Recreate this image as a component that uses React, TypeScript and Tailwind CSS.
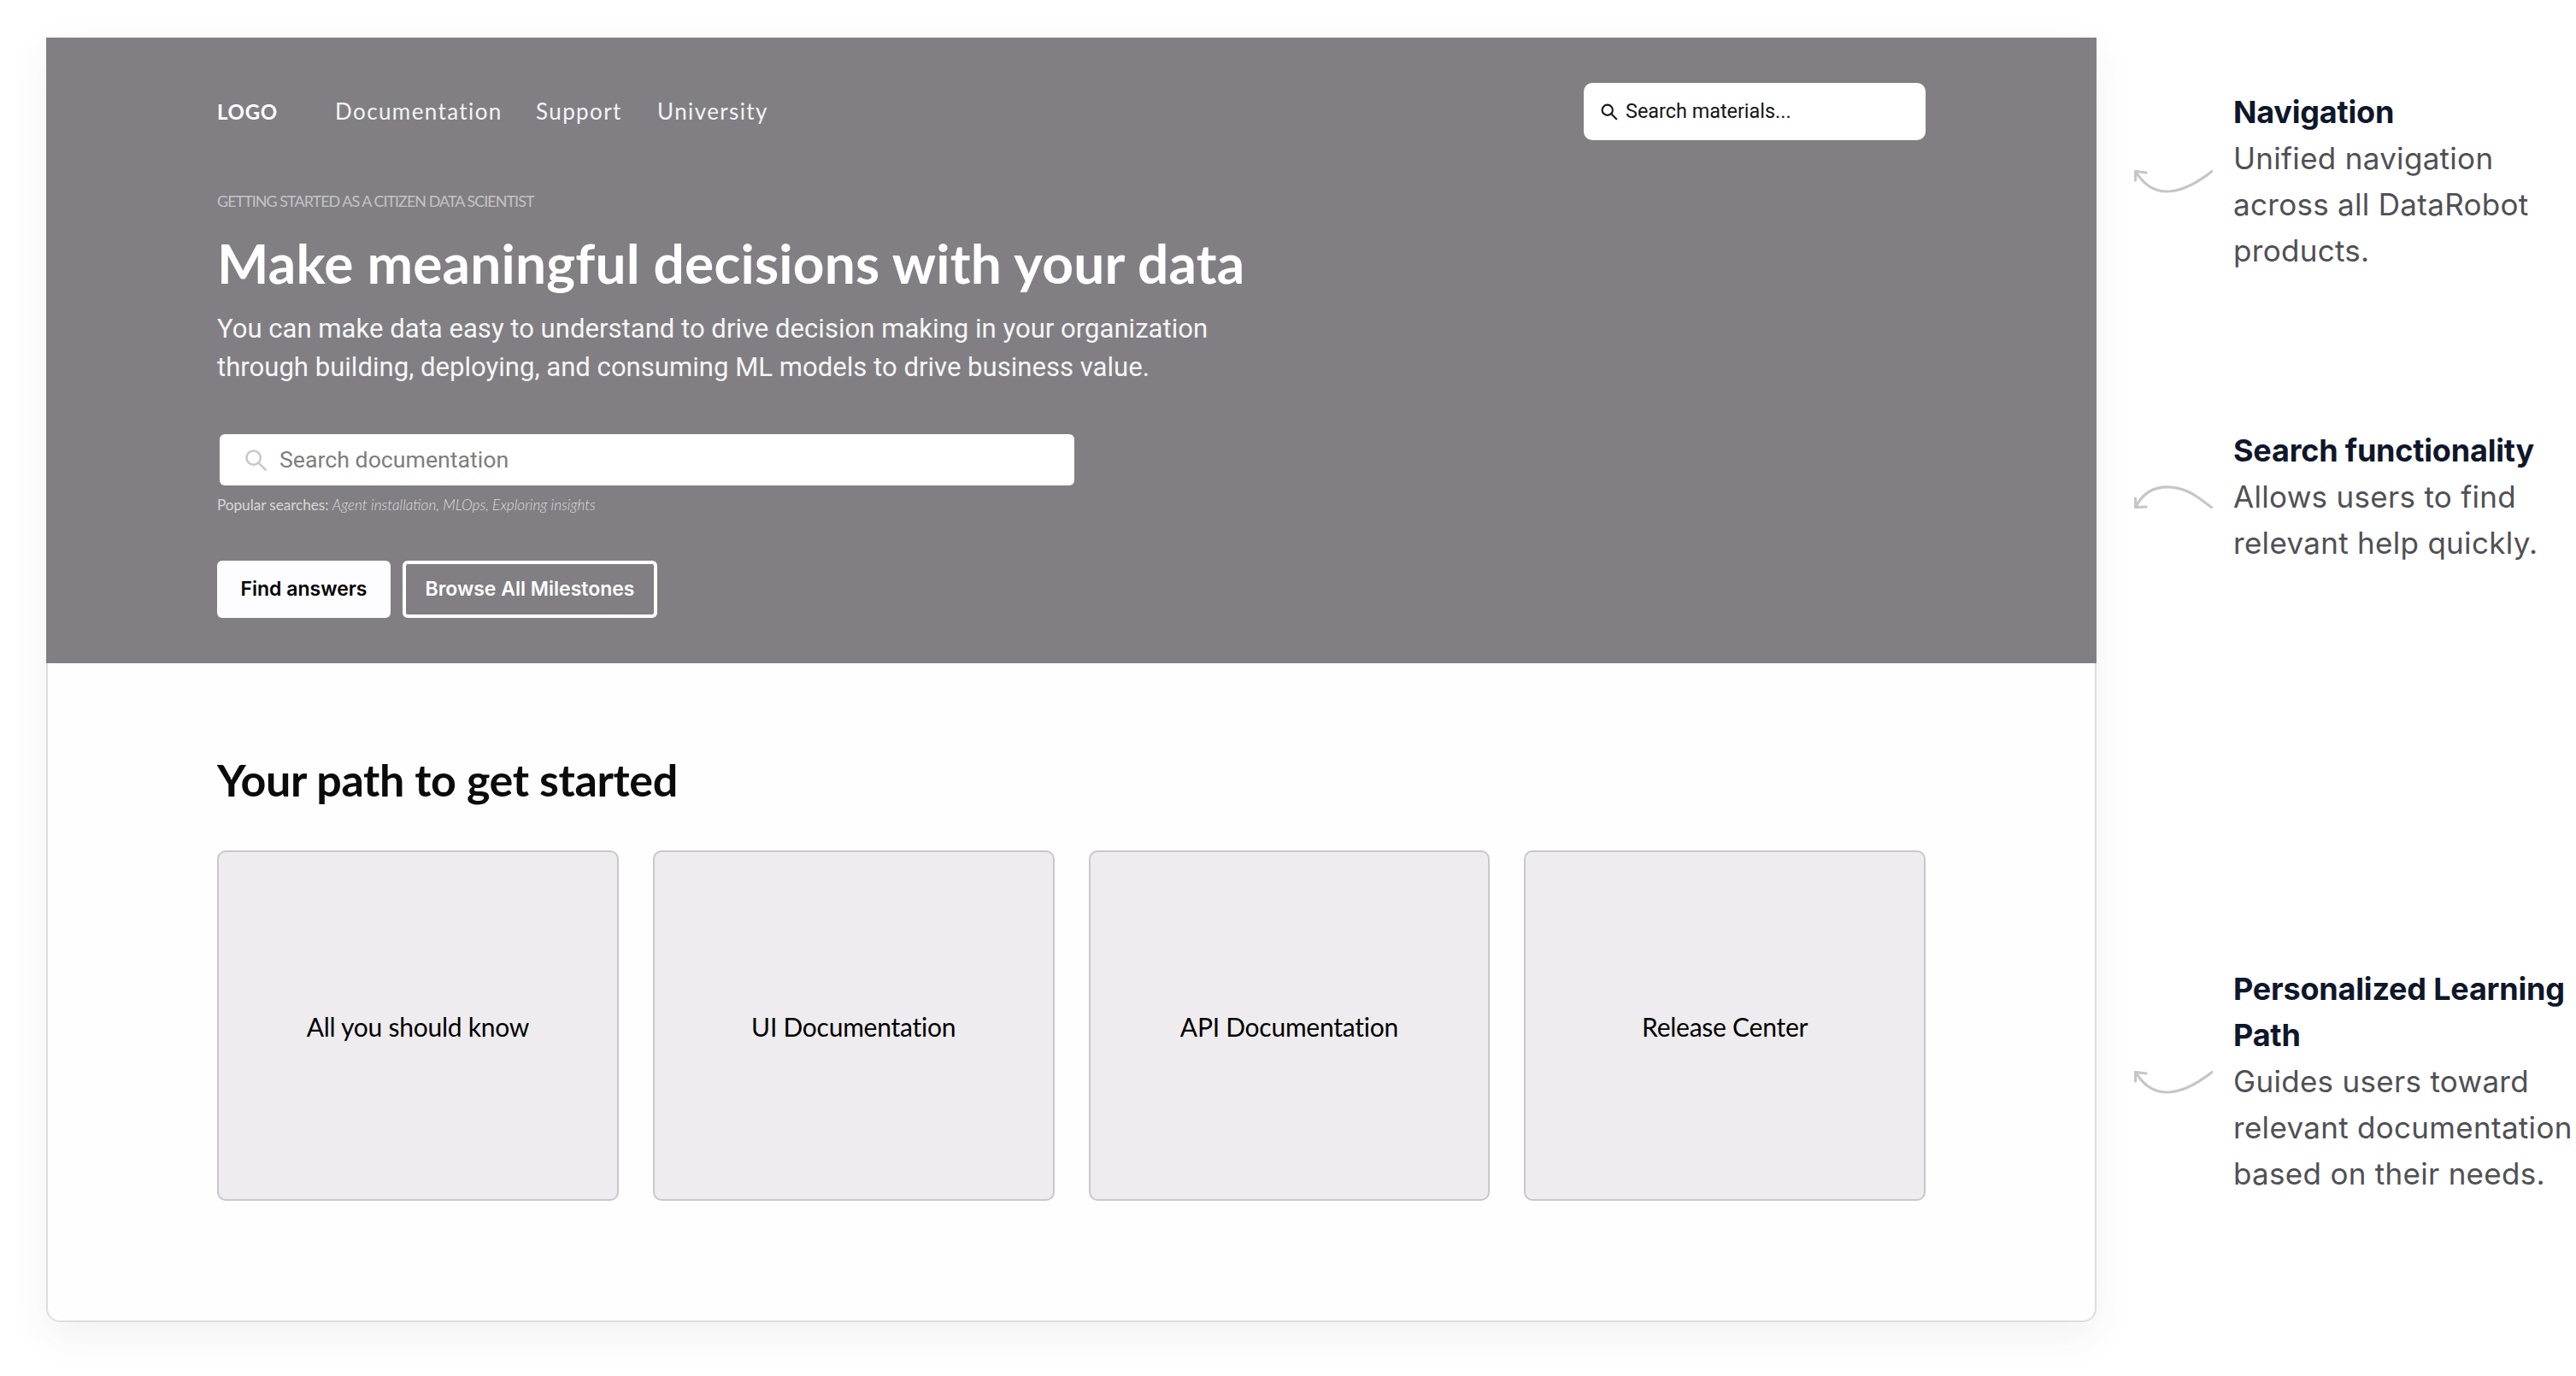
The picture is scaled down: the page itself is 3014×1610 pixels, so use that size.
import React from "react";

const TITLE = "font-['Lato','Noto_Sans',sans-serif]";

function SearchGlyph({ className, weight }: { className: string; weight: string }) {
  return (
    <svg viewBox="0 0 24 24" fill="none" stroke="currentColor" strokeWidth={weight} strokeLinecap="round" className={className}>
      <circle cx="10" cy="10" r="7" />
      <path d="M15.2 15.2 22 22" />
    </svg>
  );
}

function Arrow({ up }: { up?: boolean }) {
  return (
    <svg viewBox="0 0 92 27" fill="none" stroke="#c6c6c6" strokeWidth="3.2" strokeLinecap="round" strokeLinejoin="round" className="w-[92px] h-[27px] shrink-0">
      {up ? (
        <>
          <path d="M91 26C74 13 62 3 42 2C24 1 10 9 2 25" />
          <path d="M1.5 15 1.5 25.5 14 25" />
        </>
      ) : (
        <>
          <path d="M91 1.5C74 15 56 25 38 25C22 25 10 15 2 2" />
          <path d="M1.5 12 1.5 1.5 14 3" />
        </>
      )}
    </svg>
  );
}

function Note({ title, lines, up, arrowTop, className }: { title: string[]; lines: string[]; up?: boolean; arrowTop: string; className: string }) {
  return (
    <div className={`flex gap-[24px] items-start ${className}`}>
      <div className={arrowTop}>
        <Arrow up={up} />
      </div>
      <div className="font-['Inter',sans-serif] text-[35px] leading-[54px] whitespace-nowrap">
        {title.map((t) => (
          <div key={t} className="font-bold text-[#0f172a] text-[36px] tracking-[-0.2px]">{t}</div>
        ))}
        {lines.map((l) => (
          <div key={l} className="text-[#505055] tracking-[0.3px]">{l}</div>
        ))}
      </div>
    </div>
  );
}

function PathCard({ label }: { label: string }) {
  return (
    <div className={`flex-1 h-[410px] rounded-[10px] border-2 border-[#c9c7cb] bg-[#eeecef] flex items-center justify-center pt-[3px] text-[30px] tracking-[-0.25px] text-black ${TITLE}`}>
      {label}
    </div>
  );
}

export default function App() {
  return (
    <div className="w-[3014px] h-[1610px] bg-white flex items-start overflow-hidden">
      <div className="ml-[54px] mt-[44px] w-[2399px] h-[1503px] rounded-b-[16px] bg-[#fefefe] border-x-2 border-b-2 border-[#dedde1] shadow-[0_16px_48px_rgba(60,60,90,0.07)] shrink-0 flex flex-col">
        <div className="-mx-[2px] h-[732px] bg-[#817f83] pl-[200px] pr-[200px] pt-[53px] text-white">
          <div className="flex items-center justify-between h-[67px]">
            <div className={`flex items-center ${TITLE}`}>
              <span className="w-[138px] text-[24px] font-bold tracking-[0.7px]">LOGO</span>
              <span className="w-[235px] text-[26px] tracking-[1.4px] text-[#f4f4f4]">Documentation</span>
              <span className="w-[142px] text-[26px] tracking-[1.4px] text-[#f4f4f4]">Support</span>
              <span className="text-[26px] tracking-[1.4px] text-[#f4f4f4]">University</span>
            </div>
            <div className="w-[400px] h-[67px] rounded-[10px] bg-white flex items-center pl-[19px] gap-[9px] font-['Roboto',sans-serif] text-[23.4px] text-[#151515]">
              <SearchGlyph weight="2.4" className="w-[21px] h-[21px]" />
              Search materials...
            </div>
          </div>
          <div className={`mt-[60px] text-[18px] leading-[22px] tracking-[-1px] text-[#c4c3c6] ${TITLE}`}>GETTING STARTED AS A CITIZEN DATA SCIENTIST</div>
          <h1 className={`mt-[24px] text-[64px] leading-[76px] font-bold tracking-[0.2px] whitespace-nowrap ${TITLE}`}>Make meaningful decisions with your data</h1>
          <p className="mt-[16px] font-['Roboto',sans-serif] text-[31.1px] leading-[45px] text-[#f6f6f6] whitespace-nowrap">
            You can make data easy to understand to drive decision making in your organization
            <br />
            through building, deploying, and consuming ML models to drive business value.
          </p>
          <div className="mt-[56px] ml-[3px] w-[1000px] h-[60px] rounded-[6px] bg-white flex items-center pl-[28px] gap-[14px] font-['Roboto',sans-serif] text-[26.7px] text-[#7e7e7e]">
            <SearchGlyph weight="2.2" className="w-[28px] h-[28px] text-[#c8c8c8]" />
            Search documentation
          </div>
          <div className={`mt-[11px] h-[24px] text-[17.2px] leading-[24px] tracking-[-0.05px] text-[#d8d7da] ${TITLE}`}>
            Popular searches: <em className="font-light tracking-[0px] text-[#dcdbde]">Agent installation, MLOps, Exploring insights</em>
          </div>
          <div className="mt-[53px] flex gap-[14px] font-['Inter',sans-serif] text-[23px] font-semibold">
            <div className="w-[203px] h-[67px] rounded-[6px] bg-[#fdfcfe] text-black flex items-center justify-center">Find answers</div>
            <div className="w-[298px] h-[67px] rounded-[6px] border-[4px] border-white flex items-center justify-center">Browse All Milestones</div>
          </div>
        </div>
        <div className="flex-1 pl-[198px] pr-[198px]">
          <h2 className={`mt-[109px] text-[52px] leading-[54px] font-bold tracking-[-0.35px] text-[#0b0b0b] ${TITLE}`}>Your path to get started</h2>
          <div className="mt-[56px] flex gap-[40px]">
            <PathCard label="All you should know" />
            <PathCard label="UI Documentation" />
            <PathCard label="API Documentation" />
            <PathCard label="Release Center" />
          </div>
        </div>
      </div>
      <div className="ml-[44px] -mr-[2px] flex flex-col shrink-0">
        <Note className="mt-[104px]" arrowTop="mt-[95px]" title={["Navigation"]} lines={["Unified navigation", "across all DataRobot", "products."]} />
        <Note className="mt-[180px]" arrowTop="mt-[68px]" up title={["Search functionality"]} lines={["Allows users to find", "relevant help quickly."]} />
        <Note className="mt-[468px]" arrowTop="mt-[123px]" title={["Personalized Learning", "Path"]} lines={["Guides users toward", "relevant documentation", "based on their needs."]} />
      </div>
    </div>
  );
}
